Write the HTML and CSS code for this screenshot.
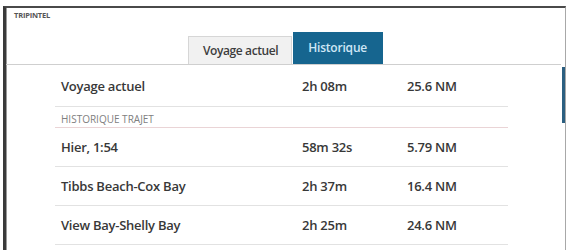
FILE: index.html
```html
<!DOCTYPE html>
<html lang="fr">
<head>
<meta charset="utf-8">
<link rel="stylesheet" href="styles.css">
</head>
<body>
<div class="frame">
  <div class="title">TRIPINTEL</div>
  <div class="tabbar">
    <div class="tab">Voyage actuel</div>
    <div class="tab active">Historique</div>
  </div>
  <div class="content">
    <div class="list">
      <div class="row first">
        <span class="c1">Voyage actuel</span>
        <span class="c2">2h 08m</span>
        <span class="c3">25.6 NM</span>
      </div>
      <div class="section">HISTORIQUE TRAJET</div>
      <div class="row">
        <span class="c1">Hier, 1:54</span>
        <span class="c2">58m 32s</span>
        <span class="c3">5.79 NM</span>
      </div>
      <div class="row">
        <span class="c1">Tibbs Beach-Cox Bay</span>
        <span class="c2">2h 37m</span>
        <span class="c3">16.4 NM</span>
      </div>
      <div class="row">
        <span class="c1">View Bay-Shelly Bay</span>
        <span class="c2">2h 25m</span>
        <span class="c3">24.6 NM</span>
      </div>
    </div>
    <div class="scrollbar"></div>
  </div>
</div>
</body>
</html>
```

FILE: styles.css
```css
html, body {
  margin: 0;
  padding: 0;
  background: #ffffff;
  width: 567px;
  height: 250px;
  overflow: hidden;
}

.frame {
  margin: 6px 0 0 3px;
  width: 559px;
  height: 250px;
  border-top: 2px solid #4a4a4a;
  border-left: 3px solid #3a3a3a;
  border-right: 1px solid #a8a8a8;
  box-shadow: inset 1px 0 0 #9a9a9a;
  font-family: "Open Sans", "Noto Sans", sans-serif;
  color: #333;
  box-sizing: content-box;
}

.title {
  font-size: 7.5px;
  font-weight: 700;
  letter-spacing: -0.2px;
  color: #555;
  padding: 3px 0 0 8px;
  height: 11px;
  line-height: 9px;
}

.tabbar {
  display: flex;
  align-items: flex-end;
  height: 42px;
  padding-left: 182px;
  border-bottom: 1px solid #cfcfcf;
  margin-right: 4px;
}

.tab {
  height: 27px;
  line-height: 27px;
  padding: 0 13px 0 14px;
  font-size: 12px;
  font-weight: 600;
  color: #3d3d3d;
  background: #f1f1f1;
  border: 1px solid #d6d6d6;
  border-bottom: none;
  letter-spacing: -0.4px;
}

.tab.active {
  height: 31px;
  line-height: 29px;
  margin-left: 1px;
  padding: 0 15px 0 14px;
  background: #16658f;
  border-color: #16658f;
  color: #cfe7f6;
  letter-spacing: -0.2px;
}

.content {
  position: relative;
  height: 190px;
}

.list {
  margin-left: 49px;
  width: 453px;
}

.row {
  display: grid;
  grid-template-columns: 241px 105px 1fr;
  height: 38px;
  align-items: center;
  padding-left: 6px;
  border-bottom: 1px solid #e2e2e2;
  font-size: 13px;
  font-weight: 600;
  color: #383838;
  letter-spacing: -0.25px;
}

.row.first {
  height: 41px;
}

.section {
  height: 20px;
  line-height: 25px;
  padding-left: 6px;
  font-size: 10px;
  color: #808080;
  letter-spacing: 0;
  border-bottom: 1px solid #ead4d6;
}

.scrollbar {
  position: absolute;
  right: 0;
  top: 2px;
  width: 3px;
  height: 56px;
  background: #2b5f80;
}
```
